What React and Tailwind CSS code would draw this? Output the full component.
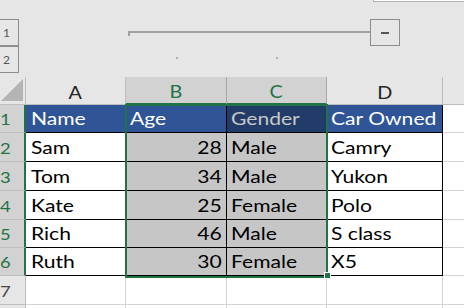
import React from "react";

const F = { fontFamily: "Lato, 'Liberation Sans', sans-serif" };

const data = [
  ["Sam", "28", "Male", "Camry"],
  ["Tom", "34", "Male", "Yukon"],
  ["Kate", "25", "Female", "Polo"],
  ["Rich", "46", "Male", "S class"],
  ["Ruth", "30", "Female", "X5"],
];

const rowH = ["h-[28px]", "h-[29px]", "h-[29px]", "h-[29px]", "h-[28px]", "h-[28px]", "h-[29px]", "h-[29px]"];

function L({ children }) {
  return <span className="inline-block whitespace-nowrap origin-left scale-x-[1.24]">{children}</span>;
}
function R({ children }) {
  return <span className="inline-block whitespace-nowrap origin-right scale-x-[1.24]">{children}</span>;
}

function RowHead({ n, sel, h }) {
  return (
    <div
      className={
        sel
          ? `${h} w-[26px] flex items-end pb-[5px] bg-[#d2d2d2] text-[#217346] border-b border-[#bdbdbd] border-r-2 border-r-[#217346]`
          : `${h} w-[26px] flex items-end pb-[5px] bg-[#e6e6e6] text-[#444] border-b border-[#bdbdbd] border-r border-r-[#bdbdbd]`
      }
    >
      {n ? <span className="text-[16px] leading-none inline-block origin-left scale-x-[1.15]">{n}</span> : null}
    </div>
  );
}

const cellBase = "flex items-end pb-[5px] text-[17px] leading-none overflow-visible";

export default function App() {
  return (
    <div className="w-[464px] h-[308px] overflow-hidden bg-white relative" style={F}>
      {/* top outline area */}
      <div className="h-[77px] bg-[#e6e6e6] relative">
        <div className="absolute left-[373px] -top-[2px] w-[100px] h-[4px] bg-white border border-[#b4b4b4]" />
        <div className="absolute -left-[4px] top-[19px] w-[23px] h-[27px] border border-[#8d8d8d] flex items-center pl-[6px] text-[12px] text-[#555]">1</div>
        <div className="absolute -left-[4px] top-[46px] w-[23px] h-[27px] border border-[#8d8d8d] flex items-center pl-[6px] text-[12px] text-[#555]">2</div>
        <div className="absolute left-[128px] top-[31px] w-[242px] h-[2px] bg-[#a0a0a0]" />
        <div className="absolute left-[128px] top-[31px] w-[2px] h-[5px] bg-[#a0a0a0]" />
        <div className="absolute left-[370px] top-[19px] w-[30px] h-[27px] border border-[#8d8d8d] flex items-center justify-center">
          <div className="w-[8px] h-[2px] bg-[#555]" />
        </div>
        <div className="absolute left-[176px] top-[57px] w-[2px] h-[2px] bg-[#b0b0b0]" />
        <div className="absolute left-[276px] top-[57px] w-[2px] h-[2px] bg-[#b0b0b0]" />
      </div>

      {/* column header row */}
      <div className="flex h-[28px]">
        <div className="w-[26px] h-full bg-[#e6e6e6] border-r border-b border-[#bdbdbd] relative">
          <div className="absolute right-[2px] bottom-[3px] w-0 h-0 border-l-[22px] border-l-transparent border-b-[22px] border-b-[#b4b4b4]" />
        </div>
        <div className="w-[100px] h-full bg-[#e6e6e6] border-r border-b border-[#bdbdbd] flex items-end justify-center pb-[3px] text-[18px] leading-none text-[#222]">
          <span className="inline-block scale-x-[1.1]">A</span>
        </div>
        <div className="w-[101px] h-full bg-[#d2d2d2] border-r border-[#a8a8a8] border-b-2 border-b-[#217346] flex items-end justify-center pb-[3px] text-[18px] leading-none text-[#217346]">
          <span className="inline-block scale-x-[1.1]">B</span>
        </div>
        <div className="w-[100px] h-full bg-[#d2d2d2] border-r border-[#a8a8a8] border-b-2 border-b-[#217346] flex items-end justify-center pb-[3px] text-[18px] leading-none text-[#217346]">
          <span className="inline-block scale-x-[1.1]">C</span>
        </div>
        <div className="w-[116px] h-full bg-[#e6e6e6] border-r border-b border-[#bdbdbd] flex items-end justify-center pb-[3px] text-[18px] leading-none text-[#222]">
          <span className="inline-block scale-x-[1.1]">D</span>
        </div>
        <div className="flex-1 h-full bg-[#e6e6e6] border-b border-[#bdbdbd]" />
      </div>

      {/* row 1: table header */}
      <div className="flex">
        <RowHead n="1" sel h={rowH[0]} />
        <div className={`${rowH[0]} w-[100px] bg-[#2f5597] text-white border-r border-b border-black pl-[5px] ${cellBase}`}><L>Name</L></div>
        <div className={`${rowH[0]} w-[101px] bg-[#2f5597] text-white border-r border-b border-black pl-[4px] ${cellBase}`}><L>Age</L></div>
        <div className={`${rowH[0]} w-[100px] bg-[#223c6a] text-[#c8c8c8] border-r border-b border-black pl-[4px] ${cellBase}`}><L>Gender</L></div>
        <div className={`${rowH[0]} w-[116px] bg-[#2f5597] text-white border-r border-b border-black pl-[4px] ${cellBase}`}><L>Car Owned</L></div>
        <div className={`${rowH[0]} flex-1 border-b border-[#d4d4d4]`} />
      </div>

      {data.map((r, i) => (
        <div className="flex" key={i}>
          <RowHead n={String(i + 2)} sel h={rowH[i + 1]} />
          <div className={`${rowH[i + 1]} w-[100px] bg-white text-black border-r border-b border-black pl-[5px] ${cellBase}`}><L>{r[0]}</L></div>
          <div className={`${rowH[i + 1]} w-[101px] bg-[#c6c6c6] text-black border-r border-b border-black justify-end pr-[4px] ${cellBase}`}><R>{r[1]}</R></div>
          <div className={`${rowH[i + 1]} w-[100px] bg-[#c6c6c6] text-black border-r border-b border-black pl-[4px] ${cellBase}`}><L>{r[2]}</L></div>
          <div className={`${rowH[i + 1]} w-[116px] bg-white text-black border-r border-b border-black pl-[4px] ${cellBase}`}><L>{r[3]}</L></div>
          <div className={`${rowH[i + 1]} flex-1 border-b border-[#d4d4d4]`} />
        </div>
      ))}

      {/* row 7 */}
      <div className="flex">
        <RowHead n="7" h={rowH[6]} />
        <div className={`${rowH[6]} w-[100px] border-r border-b border-[#d4d4d4]`} />
        <div className={`${rowH[6]} w-[101px] border-r border-b border-[#d4d4d4]`} />
        <div className={`${rowH[6]} w-[100px] border-r border-b border-[#d4d4d4]`} />
        <div className={`${rowH[6]} w-[116px] border-r border-b border-[#d4d4d4]`} />
        <div className={`${rowH[6]} flex-1 border-b border-[#d4d4d4]`} />
      </div>
      <div className="flex">
        <RowHead h={rowH[7]} />
        <div className={`${rowH[7]} w-[100px] border-r border-[#d4d4d4]`} />
        <div className={`${rowH[7]} w-[101px] border-r border-[#d4d4d4]`} />
        <div className={`${rowH[7]} w-[100px] border-r border-[#d4d4d4]`} />
        <div className={`${rowH[7]} w-[116px] border-r border-[#d4d4d4]`} />
      </div>

      {/* selection outline */}
      <div className="absolute left-[125px] top-[104px] w-[203px] h-[174px] border-2 border-[#217346] pointer-events-none" />
      <div className="absolute left-[324px] top-[272px] w-[7px] h-[7px] bg-[#217346] border border-white" />
    </div>
  );
}
